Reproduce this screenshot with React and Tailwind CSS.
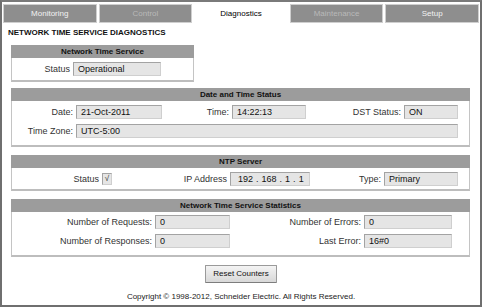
import React from "react";

const F = { fontFamily: '"Liberation Sans", Arial, sans-serif' };

function Tab({ label, active, disabled }) {
  if (active) {
    return (
      <div className="h-[19px] flex items-center justify-center bg-white text-[8px] text-black">
        {label}
      </div>
    );
  }
  return (
    <div
      className={
        "h-[19px] flex items-center justify-center bg-[#8e8e8e] border border-[#cfcfcf] text-[8px] " +
        (disabled ? "text-[#b9b9b9]" : "text-[#f2f2f2]")
      }
    >
      {label}
    </div>
  );
}

function Field({ children, className = "" }) {
  return (
    <div
      className={
        "h-[14px] bg-[#e5e5e5] border border-[#a3a3a3] border-b-[#cfcfcf] border-r-[#cfcfcf] flex items-center pl-[4px] text-[9px] leading-none text-[#111] overflow-hidden whitespace-nowrap " +
        className
      }
    >
      {children}
    </div>
  );
}

function Label({ children }) {
  return <div className="text-right pr-[3px] text-[9px] leading-none text-[#333] whitespace-nowrap">{children}</div>;
}

function Section({ title, className = "", bodyClass = "", children }) {
  return (
    <div className={"flex flex-col " + className}>
      <div className="h-[13px] bg-[#9c9c9c] flex items-center justify-center text-[8px] font-bold text-[#111]">
        {title}
      </div>
      <div className={"border border-t-0 border-[#c4c4c4] border-b-2 border-b-[#bdbdbd] " + bodyClass}>
        {children}
      </div>
    </div>
  );
}

export default function App() {
  return (
    <div style={F} className="w-[482px] h-[307px] bg-white border-2 border-[#6f6f6f] border-t-[#7a7a7a] flex flex-col">
      <div className="grid grid-cols-5 gap-[2px] px-[1px] mt-[2px]">
        <Tab label="Monitoring" />
        <Tab label="Control" disabled />
        <Tab label="Diagnostics" active />
        <Tab label="Maintenance" disabled />
        <Tab label="Setup" />
      </div>

      <div className="mt-[5px] ml-[6px] h-[10px] leading-[10px] text-[8px] font-bold text-[#111]">
        NETWORK TIME SERVICE DIAGNOSTICS
      </div>

      <div className="flex flex-col ml-[9px] w-[459px] mt-[7px]">
        <Section title="Network Time Service" className="w-[183px]" bodyClass="h-[24px]">
          <div className="grid grid-cols-[61px_88px] items-center pt-[4px]">
            <Label>Status</Label>
            <Field>Operational</Field>
          </div>
        </Section>

        <Section title="Date and Time Status" className="mt-[6px]" bodyClass="h-[46px]">
          <div className="grid grid-cols-[64px_86px_70px_74px_98px_54px] gap-y-[5px] items-center pt-[4px]">
            <Label>Date:</Label>
            <Field>21-Oct-2011</Field>
            <Label>Time:</Label>
            <Field>14:22:13</Field>
            <Label>DST Status:</Label>
            <Field>ON</Field>
            <Label>Time Zone:</Label>
            <Field className="col-span-5">UTC-5:00</Field>
          </div>
        </Section>

        <Section title="NTP Server" className="mt-[8px]" bodyClass="h-[23px]">
          <div className="grid grid-cols-[90px_10px_118px_80px_74px_74px] items-center pt-[4px]">
            <Label>Status</Label>
            <div className="h-[12px] w-[10px] bg-[#e5e5e5] border border-[#a3a3a3] border-b-[#cfcfcf] border-r-[#cfcfcf] flex items-center justify-center text-[8px] text-[#222] leading-none">
              √
            </div>
            <Label>IP Address</Label>
            <Field className="gap-[3px] pl-[7px]">
              <span>192</span>
              <span>.</span>
              <span>168</span>
              <span>.</span>
              <span>1</span>
              <span>.</span>
              <span>1</span>
            </Field>
            <Label>Type:</Label>
            <Field>Primary</Field>
          </div>
        </Section>

        <Section title="Network Time Service Statistics" className="mt-[8px]" bodyClass="h-[45px]">
          <div className="grid grid-cols-[143px_75px_134px_88px] gap-y-[5px] items-center pt-[3px]">
            <Label>Number of Requests:</Label>
            <Field>0</Field>
            <Label>Number of Errors:</Label>
            <Field>0</Field>
            <Label>Number of Responses:</Label>
            <Field>0</Field>
            <Label>Last Error:</Label>
            <Field>16#0</Field>
          </div>
        </Section>
      </div>

      <div className="flex justify-center mt-[8px]">
        <button className="w-[72px] h-[18px] border border-[#9a9a9a] border-b-[#7d7d7d] bg-gradient-to-b from-[#f4f4f4] to-[#d8d8d8] text-[8px] text-[#111] rounded-[1px]">
          Reset Counters
        </button>
      </div>

      <div className="mt-[9px] text-center text-[8px] text-[#222] leading-[10px]">
        Copyright © 1998-2012, Schneider Electric. All Rights Reserved.
      </div>
    </div>
  );
}
